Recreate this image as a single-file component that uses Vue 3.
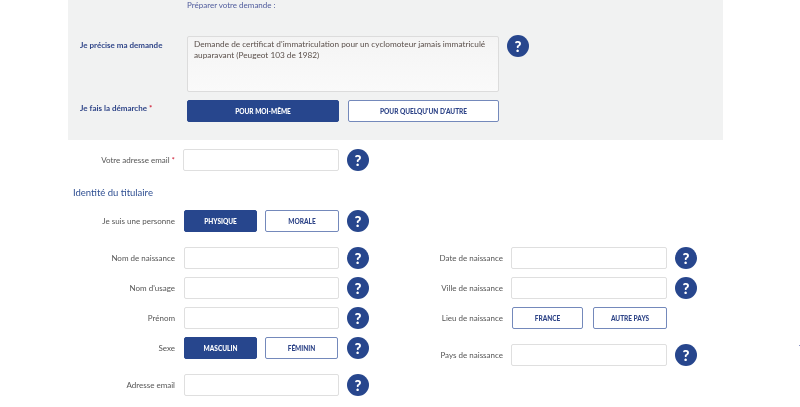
<script setup>
const left = [
  { label: 'Nom de naissance', type: 'input' },
  { label: "Nom d'usage", type: 'input' },
  { label: 'Prénom', type: 'input' },
  { label: 'Sexe', type: 'choice', options: ['MASCULIN', 'FÉMININ'], active: 0 },
  { label: 'Adresse email', type: 'input', tall: true },
]
const right = [
  { label: 'Date de naissance', type: 'input', help: true },
  { label: 'Ville de naissance', type: 'input', help: true },
  { label: 'Lieu de naissance', type: 'choice', options: ['FRANCE', 'AUTRE PAYS'], active: -1 },
  { label: 'Pays de naissance', type: 'input', help: true, country: true },
]
</script>

<template>
  <div class="page">
    <section class="panel">
      <p class="intro">Préparer votre demande :</p>
      <div class="panel-row request">
        <div class="panel-label">Je précise ma demande</div>
        <div class="textarea">Demande de certificat d'immatriculation pour un cyclomoteur jamais immatriculé auparavant (Peugeot 103 de 1982)</div>
        <span class="help help-top">?</span>
      </div>
      <div class="panel-row approach">
        <div class="panel-label">Je fais la démarche <i>*</i></div>
        <button class="btn on wide">POUR MOI-MÊME</button>
        <button class="btn wide">POUR QUELQU'UN D'AUTRE</button>
      </div>
    </section>

    <div class="row email-row">
      <label class="label narrow">Votre adresse email <i>*</i></label>
      <div class="input first"></div>
      <span class="help">?</span>
    </div>

    <h2 class="title">Identité du titulaire</h2>

    <div class="row person">
      <label class="label">Je suis une personne</label>
      <div class="choices">
        <button class="btn on">PHYSIQUE</button>
        <button class="btn">MORALE</button>
      </div>
      <span class="help">?</span>
    </div>

    <div class="columns">
      <div class="col">
        <div v-for="f in left" :key="f.label" class="row" :class="{ tall: f.tall }">
          <label class="label">{{ f.label }}</label>
          <div v-if="f.type === 'input'" class="input"></div>
          <div v-else class="choices">
            <button v-for="(o, i) in f.options" :key="o" class="btn" :class="{ on: i === f.active }">{{ o }}</button>
          </div>
          <span class="help">?</span>
        </div>
      </div>
      <div class="col col-right">
        <div v-for="f in right" :key="f.label" class="row" :class="{ country: f.country }">
          <label class="label">{{ f.label }}</label>
          <div v-if="f.type === 'input'" class="input"></div>
          <div v-else class="choices place">
            <button v-for="o in f.options" :key="o" class="btn">{{ o }}</button>
          </div>
          <span v-if="f.help" class="help">?</span>
        </div>
      </div>
    </div>
    <span class="speck"></span>
  </div>
</template>

<style>
html, body { margin: 0; background: #fff; overflow: hidden; }
</style>

<style scoped>
.page {
  position: relative;
  width: 800px;
  height: 407px;
  overflow: hidden;
  font-family: Lato, "Open Sans", sans-serif;
  font-size: 8px;
  color: #555;
  background: #fff;
  filter: blur(0.3px);
}
.panel {
  box-sizing: border-box;
  margin-left: 68px;
  width: 655px;
  height: 140px;
  background: #f1f2f2;
  padding-left: 12px;
  overflow: hidden;
}
.intro {
  margin: 0 0 0 107px;
  height: 36px;
  line-height: 11px;
  color: #4f5b9c;
}
.panel-row { display: flex; }
.request { height: 64px; }
.panel-label {
  width: 107px;
  font-weight: 700;
  color: #2f4588;
}
.request .panel-label { padding-top: 3px; line-height: 12px; }
.approach .panel-label { padding-top: 2px; line-height: 12px; }
.panel-label i, .label i { font-style: normal; color: #d0243c; }
.textarea {
  box-sizing: border-box;
  width: 312px;
  height: 56px;
  border: 1px solid #dcdcdc;
  border-radius: 2px;
  background: linear-gradient(#f4f4f4, #fafafa);
  padding: 2px 6px;
  font-size: 8.25px;
  line-height: 10.5px;
  color: #5a4f4a;
}
.help {
  flex: none;
  display: flex;
  align-items: center;
  justify-content: center;
  width: 22px;
  height: 22px;
  margin-left: 8px;
  border-radius: 50%;
  background: #27468d;
  color: #fff;
  font-size: 15px;
  font-weight: 900;
  line-height: 1;
}
.help-top { margin-top: -1px; }
.btn {
  box-sizing: border-box;
  height: 22px;
  width: 73px;
  padding: 0;
  border: 1px solid #7489bb;
  border-radius: 2px;
  background: #fff;
  color: #2f4588;
  font-family: inherit;
  font-size: 6.5px;
  font-weight: 900;
}
.btn.on { background: #27468d; border-color: #27468d; color: #fff; }
.btn.wide { width: 152px; margin-right: 9px; }
.btn.wide:last-child { width: 151px; }
.row {
  display: flex;
  align-items: center;
  height: 22px;
  margin-bottom: 8px;
}
.label {
  flex: none;
  width: 107px;
  margin-right: 9px;
  text-align: right;
}
.input {
  box-sizing: border-box;
  width: 155px;
  height: 22px;
  border: 1px solid #dfdfdf;
  border-radius: 2px;
  background: #fff;
}
.choices { display: flex; gap: 8px; width: 155px; }
.email-row { margin: 9px 0 0 68px; }
.label.narrow { margin-right: 8px; width: 107px; }
.input.first { width: 156px; }
.title {
  margin: 13px 0 0 73px;
  height: 26px;
  font-size: 9.5px;
  line-height: 17px;
  font-weight: 400;
  color: #2f4f92;
}
.person { margin: 0 0 15px 68px; }
.person .btn:last-child { width: 74px; }
.columns { display: flex; margin-left: 68px; }
.col { width: 328px; flex: none; }
.col-right { width: 400px; }
.col-right .input { width: 156px; }
.tall { margin-top: 15px; }
.col-right .label { margin-right: 8px; }
.place { gap: 10px; margin-left: 1px; width: 155px; }
.place .btn:first-child { width: 71px; }
.place .btn:last-child { width: 74px; }
.country { margin-top: 15px; }
.speck {
  position: absolute;
  left: 799px;
  top: 345px;
  width: 1px;
  height: 1px;
  background: #8a93c4;
}
</style>
